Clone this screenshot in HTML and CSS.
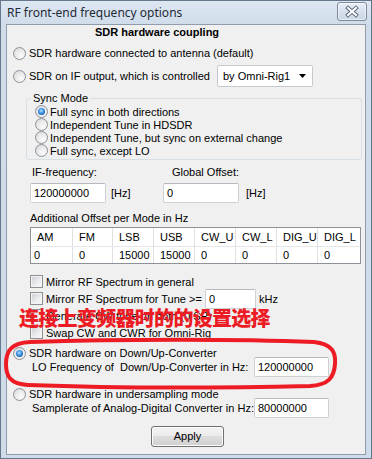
FILE: index.html
```html
<!DOCTYPE html>
<html>
<head>
<meta charset="utf-8">
<title>RF front-end frequency options</title>
<link rel="stylesheet" href="styles.css">
</head>
<body>
<div class="window">
  <div class="titlebar">
    <span class="title">RF front-end frequency options</span>
    <div class="close">
      <svg width="30" height="19" viewBox="0 0 30 19">
        <path d="M11 6 L19 13 M19 6 L11 13" stroke="#5d6b7d" stroke-width="4" stroke-linecap="square" fill="none"/>
        <path d="M11 6 L19 13 M19 6 L11 13" stroke="#ffffff" stroke-width="2" stroke-linecap="square" fill="none"/>
      </svg>
    </div>
  </div>
  <div class="client">
    <div class="heading">SDR hardware coupling</div>
    <div class="row r-ant"><span class="radio"></span><span>SDR hardware connected to antenna (default)</span></div>
    <div class="row r-if">
      <span class="radio"></span><span class="if-label">SDR on IF output, which is controlled</span>
      <div class="combo"><span>by Omni-Rig1</span><svg class="arrow" width="7" height="4" viewBox="0 0 7 4"><polygon points="0,0 7,0 3.5,4" fill="#000"/></svg></div>
    </div>
    <fieldset class="group">
      <legend>Sync Mode</legend>
      <div class="grow"><span class="radio checked"></span><span>Full sync in both directions</span></div>
      <div class="grow"><span class="radio"></span><span>Independent Tune in HDSDR</span></div>
      <div class="grow"><span class="radio"></span><span>Independent Tune, but sync on external change</span></div>
      <div class="grow"><span class="radio"></span><span>Full sync, except LO</span></div>
    </fieldset>
    <div class="labels"><span class="lab1">IF-frequency:</span><span>Global Offset:</span></div>
    <div class="inputs">
      <div class="edit e-if">120000000</div><span class="hz1">[Hz]</span>
      <div class="edit e-off">0</div><span class="hz2">[Hz]</span>
    </div>
    <div class="addl">Additional Offset per Mode in Hz</div>
    <div class="table">
      <div class="th">AM</div><div class="th">FM</div><div class="th">LSB</div><div class="th">USB</div><div class="th">CW_U</div><div class="th">CW_L</div><div class="th">DIG_U</div><div class="th">DIG_L</div>
      <div class="td first">0</div><div class="td">0</div><div class="td">15000</div><div class="td">15000</div><div class="td">0</div><div class="td">0</div><div class="td">0</div><div class="td">0</div>
    </div>
    <div class="cbrow cb-first"><span class="check"></span><span>Mirror RF Spectrum in general</span></div>
    <div class="cbrow"><span class="check"></span><span class="tune-label">Mirror RF Spectrum for Tune &gt;=</span><div class="edit e-khz">0</div><span class="khz">kHz</span></div>
    <div class="cbrow"><span class="check"></span><span>Generate CW tone on both (0 SP)</span></div>
    <div class="cbrow"><span class="check"></span><span>Swap CW and CWR for Omni-Rig</span></div>
    <div class="row r-conv"><span class="radio checked"></span><span>SDR hardware on Down/Up-Converter</span></div>
    <div class="sub"><span class="sub-label">LO Frequency of&nbsp; Down/Up-Converter in Hz:</span><div class="edit e-val">120000000</div></div>
    <div class="row r-under"><span class="radio"></span><span>SDR hardware in undersampling mode</span></div>
    <div class="sub"><span class="sub-label">Samplerate of Analog-Digital Converter in Hz:</span><div class="edit e-val">80000000</div></div>
    <div class="btnrow"><div class="button">Apply</div></div>
  </div>
</div>
<svg class="annot" width="372" height="459" viewBox="0 0 372 459">
  <path d="M30 342 C 120 339, 240 339, 314 342 C 332 344, 336 352, 335 364 C 334 378, 328 385, 310 386 C 220 388, 110 388, 28 385 C 10 384, 6 376, 6 364 C 6 350, 12 343, 30 342 Z" fill="none" stroke="#ed1c24" stroke-width="4"/>
</svg>
<div class="note">连接上变频器时的的设置选择</div>
</body>
</html>
```
FILE: styles.css
```css
* { box-sizing: border-box; }
html, body { margin: 0; padding: 0; }
body {
  position: relative;
  width: 372px;
  height: 459px;
  overflow: hidden;
  background: #ffffff;
  font-family: "Liberation Sans", Arial, sans-serif;
  font-size: 11px;
  color: #000;
}
.window {
  width: 372px;
  height: 459px;
  border: 1px solid #66778b;
  background: linear-gradient(#dde7f2, #d0dcea 24px, #cfdbe9);
  display: flex;
  flex-direction: column;
}
.titlebar {
  height: 23px;
  flex: none;
  display: flex;
  justify-content: space-between;
  align-items: flex-start;
  padding: 0 4px 0 6px;
}
.title {
  font-family: "Noto Sans", sans-serif;
  font-size: 12px;
  line-height: 22px;
  margin-top: 1px;
  color: #1f2a36;
}
.close {
  width: 30px;
  height: 19px;
  margin-top: 1px;
  border: 1px solid #7a8a9f;
  border-radius: 3px;
  background: linear-gradient(#e9eff6, #d6e0ec 50%, #cbd7e5);
  box-shadow: inset 0 0 0 1px rgba(255,255,255,0.6);
  display: flex;
}
.close svg { margin: -1px; }
.client {
  flex: 1;
  margin: 0 5px 3px 5px;
  border: 1px solid #8e9cad;
  background: #f0f0f0;
}
.heading {
  height: 15px;
  line-height: 15px;
  padding-left: 88px;
  font-weight: bold;
}
.row {
  display: flex;
  align-items: center;
  height: 14px;
  padding-left: 6px;
  white-space: nowrap;
}
.r-ant { margin-top: 6px; }
.r-if { margin-top: 5px; height: 22px; }
.r-conv { margin-top: 5px; }
.r-under { margin-top: 13px; }
.radio {
  flex: none;
  width: 13px;
  height: 13px;
  margin-right: 3px;
  border-radius: 50%;
  border: 1px solid #8d9299;
  background: radial-gradient(circle at 65% 70%, #fbfbfb 0, #ececec 45%, #d2d4d7 100%);
  position: relative;
}
.radio.checked::after {
  content: "";
  position: absolute;
  left: 2px;
  top: 2px;
  width: 7px;
  height: 7px;
  border-radius: 50%;
  background: radial-gradient(circle at 45% 40%, #bfe4ff 0, #4aa0ee 35%, #1a5fb0 75%, #0d3f7d 100%);
}
.if-label { width: 188px; flex: none; }
.combo {
  width: 96px;
  height: 22px;
  flex: none;
  border: 1px solid #c6c9ce;
  border-radius: 2px;
  background: #fff;
  display: flex;
  align-items: center;
  justify-content: space-between;
  padding: 0 6px 0 5px;
}
.arrow { display: block; }
.group {
  margin: 5px 0 0 19px;
  width: 336px;
  padding: 0 0 2px 0;
  border: 1px solid #d5dfe5;
  border-radius: 3px;
  min-width: 0;
}
.group legend {
  margin-left: 4px;
  padding: 0 2px;
  line-height: 13px;
  height: 13px;
}
.grow {
  display: flex;
  align-items: center;
  height: 13px;
  padding-left: 8px;
  white-space: nowrap;
}
.grow .radio { margin-right: 2px; }
.labels {
  display: flex;
  height: 13px;
  line-height: 13px;
  margin-top: 6px;
  padding-left: 25px;
}
.lab1 { width: 140px; }
.inputs {
  display: flex;
  align-items: center;
  height: 20px;
  margin-top: 4px;
  padding-left: 23px;
}
.edit {
  flex: none;
  height: 20px;
  line-height: 18px;
  padding-left: 3px;
  background: #fff;
  border: 1px solid #cdd1d6;
  border-top-color: #b5b9c0;
  border-radius: 2px;
}
.e-if, .e-off { width: 76px; }
.hz1 { width: 57px; padding-left: 5px; }
.hz2 { padding-left: 7px; }
.addl {
  height: 13px;
  line-height: 13px;
  margin-top: 9px;
  padding-left: 23px;
}
.table {
  margin: 2px 0 0 23px;
  width: 331px;
  height: 37px;
  border: 1px solid #8d9298;
  background: #fff;
  display: grid;
  grid-template-columns: 42px 40px 41px 41px 41px 41px 41px 42px;
  grid-template-rows: 19px 16px;
}
.th, .td {
  padding-left: 6px;
  border-right: 1px solid #e0e0e0;
  white-space: nowrap;
}
.th:nth-child(8), .td:nth-child(16) { border-right: none; }
.th {
  line-height: 18px;
  border-bottom: 1px solid #e6e6e6;
}
.td { line-height: 16px; }
.td.first { padding-left: 3px; }
.cbrow {
  display: flex;
  align-items: center;
  height: 17px;
  padding-left: 23px;
  white-space: nowrap;
}
.cb-first { margin-top: 9px; }
.check {
  flex: none;
  width: 13px;
  height: 13px;
  margin-right: 3px;
  border: 1px solid #8e8f8f;
  background: linear-gradient(135deg, #c9ccd1, #eceef0 60%, #f8f8f8);
  box-shadow: inset 0 0 0 1px #f4f4f4;
}
.tune-label { width: 159px; flex: none; }
.e-khz { width: 51px; }
.khz { padding-left: 3px; }
.sub {
  display: flex;
  align-items: center;
  height: 14px;
  padding-left: 25px;
  white-space: nowrap;
}
.sub-label { width: 222px; flex: none; }
.e-val { width: 75px; }
.btnrow {
  margin-top: 11px;
  padding-left: 144px;
}
.button {
  width: 73px;
  height: 21px;
  line-height: 19px;
  text-align: center;
  border: 1px solid #707070;
  border-radius: 3px;
  background: linear-gradient(#f2f2f2 0, #ebebeb 50%, #dddddd 50%, #cfcfcf 100%);
  box-shadow: inset 0 0 0 1px #fcfcfc;
}
.annot {
  position: absolute;
  left: 0;
  top: 0;
  pointer-events: none;
}
.note {
  position: absolute;
  left: 19px;
  top: 307px;
  font-family: "Noto Sans CJK SC", sans-serif;
  font-weight: 900;
  font-size: 20px;
  line-height: 22px;
  letter-spacing: -0.7px;
  color: #ed1c24;
  white-space: nowrap;
}
```
